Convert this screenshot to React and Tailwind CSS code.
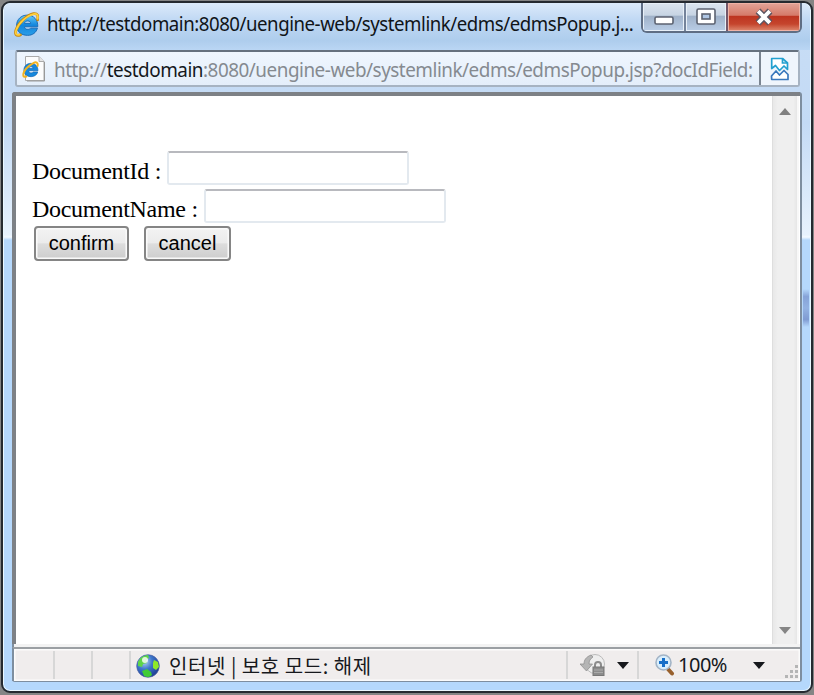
import React from "react";

function IELogo({ size }) {
  return (
    <svg width={size} height={size} viewBox="0 0 24 24" className="shrink-0">
      <defs>
        <linearGradient id="ieBlue" x1="0" y1="0" x2="0" y2="1">
          <stop offset="0" stopColor="#66cdf8" />
          <stop offset=".5" stopColor="#1285dc" />
          <stop offset="1" stopColor="#2b9fe8" />
        </linearGradient>
      </defs>
      <path d="M22.800 14.200H10c.3 1.800 1.400 2.400 3.200 2.400 1.400 0 2.100-.3 2.700-1.100h6.600c-1.200 4.300-4.600 6.900-9.400 6.900C6.700 22.400 2.500 18.600 2.500 12.900 2.500 7.200 6.800 3 12.600 3c6.200 0 10.500 4.300 10.200 11.200ZM10 10.900h6c-.2-1.500-1.300-2.300-2.900-2.300s-2.700.8-3.100 2.300Z" fill="url(#ieBlue)" stroke="#1668b4" strokeWidth=".9" fillRule="evenodd" />
      <path d="M22.700 7.500C23.500 3.500 22.600.9 18.700 1.600 13 2.600 4.500 10 2 17c-1.400 4.300 0 6.500 4.200 5" fill="none" stroke="#c98a10" strokeWidth="2.700" strokeLinecap="round" />
      <path d="M22.700 6.500C23.400 3.300 22.300 1.300 18.700 2 13 3.100 4.700 10.300 2.200 17c-1.300 3.700-.2 5.700 3.300 4.800" fill="none" stroke="#ffd03c" strokeWidth="1.700" strokeLinecap="round" />
    </svg>
  );
}

function PageIcon() {
  return (
    <svg width="24" height="27" viewBox="0 0 24 27" className="shrink-0">
      <path d="M3.500 1.500H17l5 5v19H3.500Z" fill="#fcfcfc" stroke="#aaa" />
      <path d="M5 26h17.500V7" fill="none" stroke="#999" />
      <path d="M17 1.500v5h5" fill="#e5e5e5" stroke="#aaa" />
      <svg x="0" y="5.500" width="17" height="18" viewBox="0 0 24 24">
        <path d="M22.500 13.800H9.500c.3 2.300 1.400 3 3.400 3 1.400 0 2.100-.4 2.700-1.300h6.600c-1.200 4.100-4.600 6.600-9.300 6.600C6.700 22.100 2.700 18.300 2.700 12.900 2.700 7.400 6.800 3.300 12.600 3.300c6 0 10.100 4 9.900 10.500ZM9.500 10.300h6.100c-.2-1.500-1.300-2.300-3-2.300s-2.700.8-3.100 2.300Z" fill="#1688dc" stroke="#1668b4" fillRule="evenodd" />
        <path d="M22 7C23 2 20 .5 16 3 9 7 3 13 2 18c-.7 4 1 5 4 4" fill="none" stroke="#f2b320" strokeWidth="2.800" strokeLinecap="round" />
      </svg>
    </svg>
  );
}

function WindowControls() {
  return (
    <div className="flex h-[30px] w-[161px] shrink-0 overflow-hidden rounded-b-[6px] border-2 border-t-0 border-[#5f6e84]">
      <div className="flex w-[43px] items-center justify-center border-r-2 border-[#74839a] bg-[linear-gradient(#dce5ef_0%,#c7d4e3_44%,#9fb1c8_46%,#b9cde6_100%)] shadow-[inset_0_0_0_1px_#e8f0f8]">
        <svg width="20" height="9" viewBox="0 0 20 9" className="mt-[7px]">
          <rect x="1" y="1" width="18" height="7" rx="1.500" fill="#fff" stroke="#5c6270" strokeWidth="1.600" />
        </svg>
      </div>
      <div className="flex w-[42px] items-center justify-center border-r-2 border-[#74586a] bg-[linear-gradient(#dce5ef_0%,#c7d4e3_44%,#9fb1c8_46%,#b9cde6_100%)] shadow-[inset_0_0_0_1px_#e8f0f8]">
        <svg width="20" height="17" viewBox="0 0 20 17" className="-mt-px">
          <rect x="1" y="1" width="18" height="15" rx="1.500" fill="#fff" stroke="#5c6270" strokeWidth="1.600" />
          <rect x="6" y="6" width="8" height="5" fill="#afc6e4" stroke="#5c6270" strokeWidth="1.600" />
        </svg>
      </div>
      <div className="flex flex-1 items-center justify-center bg-[linear-gradient(#e3a498_0%,#d57a69_44%,#bd3420_47%,#c5452d_75%,#de8a70_100%)] shadow-[inset_0_0_0_1px_#efb3a6]">
        <svg width="20" height="18" viewBox="0 0 20 18">
          <path d="M4 3l12 12M16 3L4 15" stroke="#5d5561" strokeWidth="6.800" />
          <path d="M4.200 3.200l11.600 11.600M15.800 3.200L4.200 14.800" stroke="#fff" strokeWidth="3.900" />
        </svg>
      </div>
    </div>
  );
}

function CompatIcon() {
  return (
    <svg width="20" height="24" viewBox="0 0 20 24" fill="none" strokeWidth="1.700">
      <path d="M1.700 11.500V1.500H12.500l5 4.500v6.500l-3.500-3.500-4.500 4.500L5.500 8.500Z" fill="#fff" stroke="#22a0cf" strokeLinejoin="round" />
      <path d="M12.500 1.500V6h5" stroke="#22a0cf" />
      <path d="M1.500 19l4.500-5 3.500 4 4.500-4.500 4 4v5H1.700Z" fill="#fff" stroke="#3978bd" strokeLinejoin="round" />
    </svg>
  );
}

function Globe() {
  return (
    <svg width="24" height="24" viewBox="0 0 24 24" className="shrink-0">
      <defs>
        <radialGradient id="globe" cx=".35" cy=".3" r=".75">
          <stop offset="0" stopColor="#b9d6f6" />
          <stop offset=".45" stopColor="#3f78cc" />
          <stop offset="1" stopColor="#1e3c91" />
        </radialGradient>
        <clipPath id="globeClip"><circle cx="12" cy="12" r="11" /></clipPath>
      </defs>
      <circle cx="12" cy="12" r="11.300" fill="url(#globe)" stroke="#4b60a0" strokeWidth=".7" />
      <g clipPath="url(#globeClip)">
        <path d="M2 8c2-5 6-7 10-7l1 3-3 2 1 3-4 1-1 3-4-1Z" fill="#5ed548" />
        <path d="M18 6l4 2 1 5-3 3-3-2V9Z" fill="#8ee829" />
        <path d="M6 17l5-2 4 3 1 3-4 3-4-2Z" fill="#40cc35" />
        <circle cx="9" cy="6" r="3" fill="#fff" opacity=".8" />
      </g>
    </svg>
  );
}

function LockIcon() {
  return (
    <svg width="26" height="24" viewBox="0 0 26 24" className="shrink-0">
      <circle cx="15" cy="11" r="9.500" fill="#eee" stroke="#bbb" />
      <path d="M11 2C6 4 4 7 4 11H0l6.500 7 6-7H9c0-3 1-5 4-7Z" fill="#b5b5b5" stroke="#909090" strokeWidth=".8" />
      <path d="M15 15v-3c0-4 6-4 6 0v3" fill="none" stroke="#8c8c8c" strokeWidth="2" />
      <rect x="13" y="14" width="11" height="8.500" fill="#8c8c8c" stroke="#777" />
      <path d="M14 17h9M14 19.500h9" stroke="#aaa" />
    </svg>
  );
}

function ZoomIcon() {
  return (
    <svg width="20" height="22" viewBox="0 0 20 22" className="shrink-0">
      <path d="M12 14l5 5.500" stroke="#98602d" strokeWidth="4" strokeLinecap="round" />
      <circle cx="8.500" cy="8.500" r="7.500" fill="#d9eefc" stroke="#a3b4c6" strokeWidth="1.600" />
      <path d="M8.500 4v9M4 8.500h9" stroke="#176fc8" strokeWidth="3" />
    </svg>
  );
}

function Caret({ className }) {
  return (
    <svg width="12" height="7" viewBox="0 0 12 7" className={className}>
      <path d="M0 0h12L6 7Z" fill="currentColor" />
    </svg>
  );
}

function Field({ label, labelClass }) {
  return (
    <label className="flex h-[37.500px] items-start">
      <span className={`pt-[7px] whitespace-pre text-[24px] leading-[27px] ${labelClass}`}>{label}</span>
      <input className="h-[34px] w-[242px] rounded-[3px] border-2 border-[#e3e9ef] border-t-[#b8b9be] bg-white outline-none" />
    </label>
  );
}

function SysButton({ children, className }) {
  return (
    <button className={`h-[35px] rounded-[4px] border-2 border-[#858585] bg-[linear-gradient(#f3f3f3_0%,#ebebeb_48%,#dddddd_51%,#cdcdcd_100%)] pb-[2px] font-['Liberation_Sans',sans-serif] text-[20px] leading-none text-black shadow-[inset_0_0_0_1.500px_#fafafa] ${className}`}>
      {children}
    </button>
  );
}

export default function App() {
  return (
    <div className="h-[695px] w-[814px] overflow-hidden bg-[#858585] pt-px pr-px pb-[2px] pl-px">
      <div className="relative flex h-[692px] w-[812px] flex-col rounded-[9px] border-2 border-[#252a30] bg-[linear-gradient(#c9def5_0px,#c3daf5_120px,#e7f2fd_232px,#f3f9ff_234px,#b5d8fc_237px,#b5d8fc_100%)] px-[9px] pb-[9px] shadow-[inset_0_0_0_1px_#eaf8ff]">
        <div className="absolute top-[286px] right-[2px] h-[38px] w-[6px] bg-[linear-gradient(#b5d8fc,#86a3d8_20%,#93b2e2_50%,#7f9bd2_80%,#b5d8fc)]" />
        <header className="-mx-[8px] flex h-[47px] shrink-0 justify-between rounded-t-[7px] bg-[linear-gradient(#dceafa_0%,#c1d9f4_35%,#aecded_80%,#bad6f4_100%)] pr-[8px] pl-[10px]">
          <div className="flex min-w-0 flex-1 items-start">
            <div className="mt-[9px]"><IELogo size={25} /></div>
            <span className="mt-[7px] ml-[8px] inline-block origin-left scale-x-[0.932] whitespace-nowrap font-['Noto_Sans',sans-serif] text-[20px] leading-[27px] tracking-[-0.500px] text-[#101418]">http://testdomain:8080/uengine-web/systemlink/edms/edmsPopup.j...</span>
          </div>
          <WindowControls />
        </header>

        <div className="mr-[2px] ml-[3px] flex h-[37px] shrink-0 rounded-[3px] border-2 border-[#a6b3c2] border-t-[#66717e] bg-[linear-gradient(#eff6fe,#e4eefa)]">
          <div className="flex min-w-0 flex-1 items-center pl-[5px]">
            <PageIcon />
            <span className="mt-px ml-[8px] inline-block w-0 origin-left scale-x-[0.943] whitespace-nowrap font-['Noto_Sans',sans-serif] text-[20px] leading-[27px] tracking-[-0.500px] text-[#858a90]">
              http://<span className="text-[#15181c]">testdomain</span>:8080/uengine-web/systemlink/edms/edmsPopup.jsp?docIdField:
            </span>
          </div>
          <div className="w-[5px] shrink-0" />
          <div className="flex w-[39px] shrink-0 items-center justify-center border-l-2 border-[#7a8490] bg-[#eff5fc] pl-px">
            <CompatIcon />
          </div>
        </div>

        <div className="mt-[5px] flex h-[590px] shrink-0 flex-col rounded-[3px] border-r-2 border-b-2 border-[#7e8e9f]">
          <main className="flex h-[552px] shrink-0 rounded-tl-[3px] border-t-4 border-l-4 border-[#7d8186] bg-white">
            <form className="flex-1 pt-[55px] pl-[16px] font-['Liberation_Serif',serif] text-black" onSubmit={(e) => e.preventDefault()}>
              <Field label="DocumentId :" labelClass="w-[134.500px] tracking-[-0.300px]" />
              <Field label="DocumentName :" labelClass="w-[172px] tracking-[-0.300px]" />
              <div className="flex gap-[15px] pl-[2px]">
                <SysButton className="w-[95px]">confirm</SysButton>
                <SysButton className="w-[87px]">cancel</SysButton>
              </div>
            </form>
            <div className="mr-px flex w-[27px] shrink-0 flex-col items-center justify-between border-r-2 border-l border-r-[#f8f8f8] border-l-[#dedede] bg-[linear-gradient(90deg,#e8e8e8,#efefef_20%,#efefef_85%,#e6e6e6)] pt-[12px] pb-[10px]">
              <Caret className="rotate-180 text-[#808080]" />
              <Caret className="text-[#858585]" />
            </div>
          </main>
          <div className="h-[3px] shrink-0 border-l-2 border-[#7e8e9f] bg-[#f3f3f3]" />
          <footer className="flex flex-1 border-t-2 border-l-2 border-t-[#9b9fa3] border-l-[#7e8e9f] bg-[#f0eded] pt-[2px] pl-[2px] pr-px font-['Noto_Sans',sans-serif] text-[#16181c] shadow-[inset_0_0_0_1.500px_#fbfbfb]">
            <div className="mb-[2px] w-[39px] border-r-2 border-[#d7d7d7]" />
            <div className="mb-[2px] w-[38px] border-r-2 border-[#d7d7d7]" />
            <div className="mb-[2px] w-[38px] border-r-2 border-[#d7d7d7]" />
            <div className="flex flex-1 items-center pl-[5px]">
              <Globe />
              <span className="ml-[9px] whitespace-nowrap font-['Noto_Sans_CJK_KR',sans-serif] text-[20px] leading-[28px] tracking-[0.550px]">인터넷 | 보호 모드: 해제</span>
            </div>
            <div className="mb-[2px] flex w-[71px] items-center border-l-2 border-[#d7d7d7] pl-[12px]">
              <LockIcon />
              <Caret className="ml-[11px]" />
            </div>
            <div className="mb-[2px] flex w-[162px] items-center border-l-2 border-[#d7d7d7] pl-[16px]">
              <ZoomIcon />
              <span className="ml-[3px] w-[51px] text-[20px] leading-[28px] tracking-[-0.500px]">100%</span>
              <Caret className="ml-[24px]" />
              <svg width="14" height="14" viewBox="0 0 14 14" className="ml-auto self-end" fill="#b5b5b5">
                <path d="M10 0h3v3h-3zM5 5h3v3H5zM10 5h3v3h-3zM0 10h3v3H0zM5 10h3v3H5zM10 10h3v3h-3z" />
              </svg>
            </div>
          </footer>
        </div>
      </div>
    </div>
  );
}
